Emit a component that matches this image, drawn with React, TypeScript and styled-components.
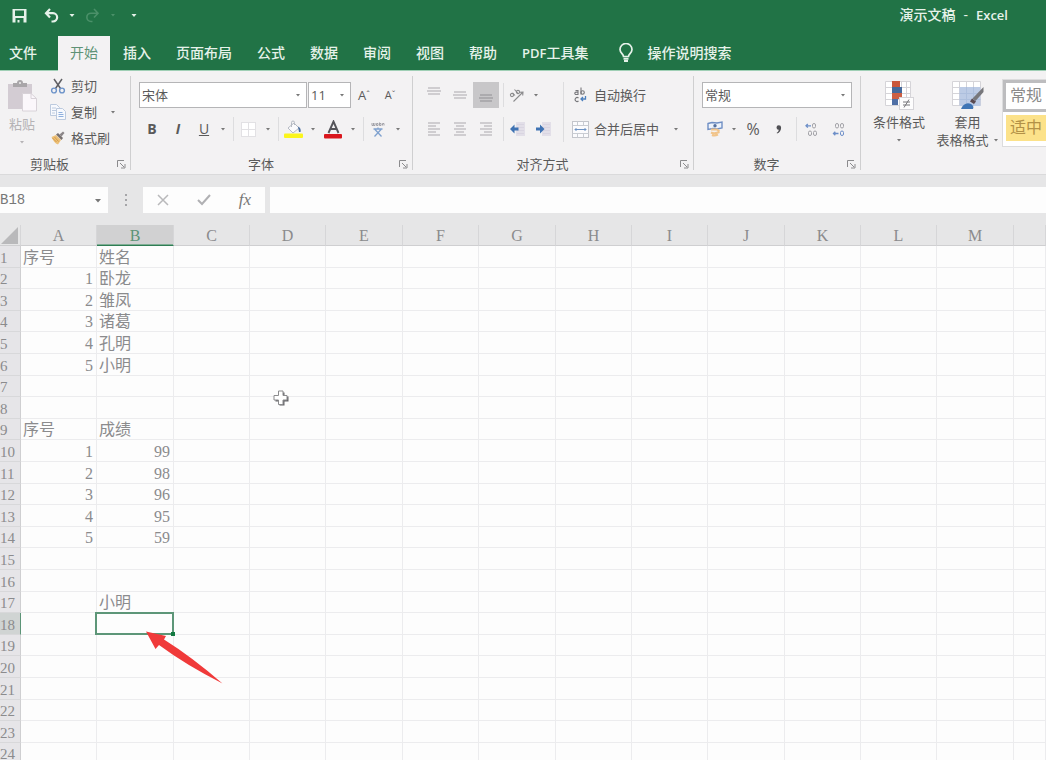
import React from "react";
import styled, { createGlobalStyle, css } from "styled-components";

const GREEN = "#217346";
const UI = `"Open Sans", "Noto Sans CJK SC", sans-serif`;
const SHEET = `"Liberation Serif", "Noto Sans CJK SC", serif`;

const GlobalStyle = createGlobalStyle`
  * { box-sizing: border-box; }
  html, body { margin: 0; height: 100%; overflow: hidden; }
  body { font-family: ${UI}; font-size: 13px; line-height: 18px; color: #5a5a5a; background: #e6e6e7; }
  button, input, select { font: inherit; color: inherit; margin: 0; padding: 0; border: 0; background: none; border-radius: 0; outline: none; }
  svg { display: block; flex: none; }
`;

const Window = styled.div`
  display: flex;
  flex-direction: column;
  height: 100vh;
  overflow: hidden;
`;

/* ---- title bar and tabs ---- */
const TitleBar = styled.header`
  display: flex;
  align-items: center;
  justify-content: space-between;
  height: 36px;
  padding: 0 38px 6px 3px;
  background: ${GREEN};
  color: #e6f2ea;
`;
const QuickAccess = styled.div`
  display: flex;
  align-items: center;
`;
const QuickButton = styled.button<{ $w: number; $dim?: boolean }>`
  display: flex;
  align-items: center;
  justify-content: center;
  width: ${(p) => p.$w}px;
  height: 24px;
  color: ${(p) => (p.$dim ? "#4b9069" : "#e6f2ea")};
`;
const DocTitle = styled.div`
  display: flex;
  gap: 8px;
  font-size: 14px;
  font-weight: 500;
  & > span:last-child { font-size: 13px; font-weight: 600; }
`;
const TabBar = styled.nav`
  display: flex;
  align-items: stretch;
  gap: 1px;
  height: 35px;
  padding-left: 9px;
  background: ${GREEN};
  box-shadow: inset 0 -1px 0 #9fcfb5;
`;
const Tab = styled.button<{ $active?: boolean; $first?: boolean }>`
  padding: 0 12px 2px;
  font-size: 14px;
  font-weight: 500;
  white-space: nowrap;
  color: #e6f2ea;
  ${(p) => p.$first && css`padding: 0 20px 2px 0;`}
  ${(p) => p.$active && css`
    background: #f3f2f3;
    color: #5f9276;
    font-weight: 400;
  `}
`;
const Latin = styled.span`
  font-size: 13px;
  font-weight: 600;
`;
const TellMe = styled.button`
  display: flex;
  align-items: center;
  gap: 14px;
  margin-left: 18px;
  padding-bottom: 2px;
  font-size: 14px;
  font-weight: 500;
  white-space: nowrap;
  color: #e6f2ea;
`;

/* ---- ribbon ---- */
const RibbonBar = styled.section`
  display: flex;
  height: 104px;
  background: #f3f2f3;
  border-bottom: 1px solid #dadadb;
  overflow: hidden;
`;
const Group = styled.div<{ $w?: number }>`
  display: flex;
  flex-direction: column;
  flex: ${(p) => (p.$w ? `0 0 ${p.$w}px` : "1 0 auto")};
`;
const GroupDivider = styled.div`
  flex: 0 0 1px;
  margin: 5px 0 4px;
  background: #cfcfd0;
`;
const GroupBody = styled.div<{ $flush?: boolean }>`
  display: flex;
  flex: 1;
  padding: ${(p) => (p.$flush ? "0" : "11px 0 0 8px")};
`;
const GroupFooter = styled.div<{ $shift?: number }>`
  display: flex;
  align-items: center;
  height: 20px;
  padding-right: 4px;
  & > span { flex: 1; padding-right: ${(p) => p.$shift ?? 8}px; text-align: center; }
`;
const Stack = styled.div<{ $gap?: number }>`
  display: flex;
  flex-direction: column;
  gap: ${(p) => p.$gap ?? 0}px;
`;
const ClipboardList = styled(Stack)`
  padding: 2px 0 0 6px;
`;
const Row = styled.div`
  display: flex;
  align-items: center;
  height: 26px;
`;
const Divider = styled.div<{ $tall?: boolean }>`
  width: 1px;
  height: ${(p) => (p.$tall ? 60 : 24)}px;
  margin-left: ${(p) => (p.$tall ? 7 : 4)}px;
  background: #dddddf;
`;
const IconButton = styled.button<{ $w?: number; $on?: boolean }>`
  display: flex;
  align-items: center;
  justify-content: center;
  width: ${(p) => p.$w ?? 26}px;
  height: 26px;
  background: ${(p) => (p.$on ? "#c8c7c9" : "transparent")};
`;
const Glyph = styled.span<{ $size?: number; $bold?: boolean; $italic?: boolean; $underline?: boolean }>`
  font-size: ${(p) => p.$size ?? 14}px;
  font-weight: ${(p) => (p.$bold ? 700 : 400)};
  font-style: ${(p) => (p.$italic ? "italic" : "normal")};
  text-decoration: ${(p) => (p.$underline ? "underline" : "none")};
`;
const TextButton = styled.button<{ $pad?: number }>`
  display: flex;
  align-items: center;
  gap: 5px;
  height: 26px;
  padding-left: ${(p) => p.$pad ?? 0}px;
  white-space: nowrap;
`;
const BigButton = styled.button<{ $w: number; $dim?: boolean; $right?: number }>`
  display: flex;
  flex-direction: column;
  align-items: center;
  width: ${(p) => p.$w}px;
  padding: 9px ${(p) => p.$right ?? 0}px 0 0;
  white-space: nowrap;
  color: ${(p) => (p.$dim ? "#b5b3b5" : "inherit")};
  & > svg:first-child { margin-bottom: 3px; }
`;
const BigLine = styled.span`
  display: flex;
  align-items: center;
  justify-content: center;
  gap: 4px;
  min-height: 18px;
`;
const SelectBox = styled.label<{ $w: number }>`
  display: flex;
  align-items: center;
  width: ${(p) => p.$w}px;
  height: 26px;
  padding-right: 4px;
  background: #fff;
  border: 1px solid #b5b5b7;
  & > select { flex: 1; min-width: 0; height: 24px; padding-left: 2px; appearance: none; }
`;
const SelectPair = styled.div`
  display: flex;
  gap: 1px;
`;
const Gallery = styled.div`
  flex: 1;
  min-width: 44px;
  height: 68px;
  margin-top: 8px;
  background: #fff;
  border: 1px solid #dcdcdd;
  border-right: 0;
  font-size: 16px;
  overflow: hidden;
`;
const StyleItem = styled.button<{ $picked?: boolean }>`
  display: block;
  width: 100px;
  text-align: left;
  white-space: nowrap;
  ${(p) => p.$picked
    ? css`height: 32px; padding: 0 0 3px 4px; border: 3px solid #bdbdbf; color: #8a8a8a;`
    : css`height: 26px; margin: 3px 0 0 3px; padding: 0 0 3px 4px; background: #fce28a; color: #b39147;`}
`;

/* ---- formula bar ---- */
const FormulaRow = styled.section`
  display: flex;
  align-items: center;
  height: 26px;
  margin: 12px 0;
`;
const NameBox = styled.label`
  display: flex;
  align-items: center;
  width: 108px;
  height: 26px;
  padding-right: 5px;
  background: #fdfdfd;
  & > input {
    flex: 1;
    min-width: 0;
    font-family: "Liberation Mono", monospace;
    font-size: 14px;
    color: #777;
  }
`;
const Grip = styled.div`
  display: flex;
  justify-content: center;
  width: 35px;
`;
const FormulaButtons = styled.div`
  display: flex;
  align-items: center;
  justify-content: space-between;
  width: 122px;
  height: 26px;
  padding: 0 7px;
  margin-right: 5px;
  background: #fdfdfd;
`;
const Fx = styled.span`
  font-family: "Liberation Serif", serif;
  font-size: 17px;
  font-style: italic;
  color: #777;
`;
const FormulaInput = styled.input`
  flex: 1;
  height: 26px;
  && { background: #fdfdfd; }
`;

/* ---- worksheet ---- */
const SheetArea = styled.main`
  position: relative;
  flex: 1;
  overflow: hidden;
  background: #fdfdfd;
`;
const Grid = styled.table`
  width: 100%;
  table-layout: fixed;
  border-spacing: 0;
  font-family: ${SHEET};
  font-size: 16px;
  line-height: 18px;
  color: #8b8b8d;
  & th { font-weight: 400; padding: 2px 0 0; }
`;
const Column = styled.col<{ $w?: number }>`
  width: ${(p) => (p.$w ? `${p.$w}px` : "auto")};
`;
const ColumnHead = styled.th<{ $on?: boolean }>`
  height: 21px;
  background: ${(p) => (p.$on ? "#d1d1d2" : "#e6e6e7")};
  color: ${(p) => (p.$on ? "#5c9477" : "#8b8b8d")};
  border-right: 1px solid #d6d6d8;
  border-bottom: 1px solid ${(p) => (p.$on ? "#2f7d54" : "#cfcfd1")};
  box-shadow: ${(p) => (p.$on ? "inset 0 -1px 0 #7fae94" : "none")};
`;
const Corner = styled.th`
  background: #e6e6e7;
  border-right: 1px solid #d6d6d8;
  border-bottom: 1px solid #cfcfd1;
`;
const SheetRow = styled.tr<{ $h: number }>`
  height: ${(p) => p.$h}px;
`;
const RowHead = styled.th<{ $on?: boolean }>`
  text-align: left;
  font-size: 15px;
  background: ${(p) => (p.$on ? "#d0d4d3" : "#e6e5e8")};
  border-right: 1px solid ${(p) => (p.$on ? "#5c9477" : "#cfcfd1")};
  border-bottom: 1px solid #d8d8da;
`;
const Cell = styled.td<{ $num?: boolean; $on?: boolean }>`
  padding: 2px 3px 0 2px;
  text-align: ${(p) => (p.$num ? "right" : "left")};
  white-space: nowrap;
  border-right: 1px solid #ececee;
  border-bottom: 1px solid #ececee;
  ${(p) => p.$on && css`
    position: relative;
    &::before { content: ""; position: absolute; inset: -1px -1px -1px -2px; border: 2px solid #5d9678; }
    &::after { content: ""; position: absolute; right: -2px; bottom: -2px; width: 4px; height: 4px; background: #137a41; }
  `}
`;
const Pointer = styled.svg<{ $x: number; $y: number }>`
  position: absolute;
  left: ${(p) => p.$x}px;
  top: ${(p) => p.$y}px;
  pointer-events: none;
`;

/* ---- icons ---- */
const Caret = ({ w = 12, s = 4, c = "#777" }: { w?: number; s?: number; c?: string }) => (
  <svg width={w} height="8" viewBox={`0 0 ${w} 8`} aria-hidden>
    <path d={`M${w / 2 - s / 2} 3h${s}l${-s / 2} ${s / 2 + 0.5}z`} fill={c} />
  </svg>
);
const Launcher = () => (
  <svg width="9" height="9" viewBox="0 0 9 9" fill="none" stroke="#8b8b8d" aria-hidden>
    <path d="M.5 7V.5H7M3 3l4 4M8 4v4H4" />
  </svg>
);
const SaveIcon = () => (
  <svg width="15" height="15" viewBox="0 0 15 15" aria-hidden>
    <path fillRule="evenodd" fill="currentColor" d="M.5 1h14v13.500H.5zM3 2.500v5.500h9V2.500zM3.500 10v4.500H5.500V12h2v2.500H11.500V10z" />
  </svg>
);
const UndoIcon = ({ flip }: { flip?: boolean }) => (
  <svg width="15" height="15" viewBox="0 0 15 15" fill="none" stroke="currentColor" strokeWidth={flip ? 1.6 : 2.2} aria-hidden>
    <g transform={flip ? "translate(15 0) scale(-1 1)" : undefined}>
      <path d="M6 1L2 5.200l4 4.300M2.500 5.200H9a4 4 0 0 1 0 8.300H7.500" />
    </g>
  </svg>
);
const BulbIcon = () => (
  <svg width="14" height="20" viewBox="0 0 14 20" fill="none" stroke="currentColor" strokeWidth="1.700" aria-hidden>
    <path d="M4.500 13.500c0-2.500-3.500-3.500-3.500-7a6 6 0 0 1 12 0c0 3.500-3.500 4.500-3.500 7z" />
    <path d="M4.500 15.800h5M5 18h4" strokeWidth="2" />
  </svg>
);
const PasteIcon = () => (
  <svg width="30" height="32" viewBox="0 0 30 32" aria-hidden>
    <rect x="1" y="4" width="24" height="25" fill="#d3ccd3" />
    <path d="M6 3h4a3 3 0 0 1 6 0h4v4H6z" fill="#a9a6a9" />
    <circle cx="13" cy="3" r="1" fill="#eee" />
    <path d="M15.500 13.500h8.500l5.500 5V31h-14z" fill="#fbf7fb" stroke="#d8d2d8" />
    <path d="M24 13.500v5h5.500" fill="none" stroke="#d8d2d8" />
  </svg>
);
const CutIcon = () => (
  <svg width="16" height="16" viewBox="0 0 16 16" fill="none" aria-hidden>
    <path d="M4 1l6.500 9.500M12 1L5.500 10.500" stroke="#606064" strokeWidth="1.500" />
    <circle cx="4" cy="12.500" r="2.400" stroke="#6d93c9" strokeWidth="1.400" />
    <circle cx="12" cy="12.500" r="2.400" stroke="#6d93c9" strokeWidth="1.400" />
  </svg>
);
const CopyIcon = () => (
  <svg width="16" height="16" viewBox="0 0 16 16" fill="#f7f9fd" stroke="#bccade" aria-hidden>
    <path d="M.5.5h6l3 3v8h-9z" />
    <path d="M2 4h4M2 6.500h4M2 9h3" />
    <path d="M6.500 4.500h6l3 3v8h-9z" />
    <path d="M8.500 8.500h4M8.500 10.500h5M8.500 12.500h5" stroke="#8fb0de" />
  </svg>
);
const BrushIcon = () => (
  <svg width="16" height="16" viewBox="0 0 16 16" aria-hidden>
    <path d="M1.500 7l4.500-2 5 5-3 4.500c-3-1-5-4-6.500-7.500z" fill="#ecc078" />
    <path d="M2.500 8l4 4M4.500 7l4 4.500" stroke="#d69b47" />
    <path d="M6 4.500l2-1.500 5 5-1.500 2z" fill="#77706f" />
    <path d="M9.500 4.500L13 1.500l1.500 1.500-3 3.500z" fill="#8b8688" />
  </svg>
);
const BordersIcon = () => (
  <svg width="15" height="15" viewBox="0 0 15 15" aria-hidden>
    <rect x=".5" y=".5" width="14" height="14" fill="#fff" stroke="#e2e1e4" />
    <path d="M7.500 1v13M1 7.500h13" stroke="#e2e1e4" />
  </svg>
);
const FillIcon = () => (
  <svg width="19" height="18" viewBox="0 0 19 18" aria-hidden>
    <path d="M4 8l6-5 5 5-6 5z" fill="#fbfbfd" stroke="#b5bac3" />
    <path d="M7.500 7V2.500a1.500 1.500 0 0 1 3 0V5" fill="none" stroke="#b5bac3" />
    <path d="M14 6.500c2.500 1 3 3 2.500 5.500h-1.500z" fill="#4a6fa0" />
    <rect y="13.500" width="19" height="4.500" rx="1" fill="#fbf51c" />
  </svg>
);
const FontColorIcon = () => (
  <svg width="19" height="19" viewBox="0 0 19 19" aria-hidden>
    <path d="M4.500 13L9.500 1.500l5 11.500M6.500 9h6" fill="none" stroke="#55555a" strokeWidth="1.900" />
    <rect y="14" width="18" height="4.500" rx="1" fill="#d9161d" />
  </svg>
);
const PhoneticIcon = () => (
  <svg width="14" height="15" viewBox="0 0 14 15" fill="none" aria-hidden>
    <path d="M1 1v2.500h1.500V1M2.500 3.500H4V1M5.500 3.500V1.500h1.500v2zM8.500.5v3H10v-2H8.500M11.500 3.500v-2H13v2" stroke="#a2a2a8" />
    <path d="M2.500 7h9M7 5.500V7M4 7.500l6.500 7M10 7.500l-6.500 7" stroke="#7fa1cf" strokeWidth="1.300" />
  </svg>
);
const Lines = ({ rows, top, h = 14, c = "#cfcdd0" }: { rows: [number, number][]; top: number; h?: number; c?: string }) => (
  <svg width="14" height={h} viewBox={`0 0 14 ${h}`} stroke={c} strokeWidth="2" aria-hidden>
    {rows.map(([a, b], i) => <path key={i} d={`M${a} ${top + i * 3}H${b}`} />)}
  </svg>
);
const OrientIcon = () => (
  <svg width="16" height="15" viewBox="0 0 16 15" fill="none" stroke="#8b8b8d" strokeWidth="1.100" aria-hidden>
    <path d="M4.500 13.500L13.500 4.500M10.500 4.200l3.500-.2-.3 3.500" />
    <circle cx="3" cy="7" r="1.600" />
    <path d="M3.500 4.800l2.500 2.700M5.500 1.500l4 4.500" />
    <circle cx="9" cy="4" r="1.600" />
  </svg>
);
const IndentIcon = ({ right }: { right?: boolean }) => (
  <svg width="17" height="15" viewBox="0 0 17 15" aria-hidden>
    <rect x="7" width="9" height="14" fill="#e2dfe8" />
    <path d="M8 2.500h7M8 5.500h7M8 8.500h7M8 11.500h7" stroke="#d9d5e1" />
    {right
      ? <path d="M1 5.500h4V2.500L9.500 7 5 11.500V8.500H1z" fill="#3f73b3" />
      : <path d="M9.500 5.500h-4V2.500L1 7l4.500 4.500V8.500h4z" fill="#3f73b3" />}
  </svg>
);
const WrapIcon = () => (
  <svg width="17" height="16" viewBox="0 0 17 16" fill="none" stroke="#77777b" strokeWidth="1.100" aria-hidden>
    <path d="M3.500 3.500h2.500v4H4a1.200 1.200 0 0 1 0-2.400h2M9 .5v7" />
    <circle cx="10.600" cy="5.500" r="1.700" />
    <path d="M6.500 11a2 2 0 1 0 0 3" />
    <path d="M13.500 9v3H9.500M11 10l-2 2 2 2" stroke="#4d80bd" strokeWidth="1.300" />
  </svg>
);
const MergeIcon = () => (
  <svg width="17" height="17" viewBox="0 0 17 17" fill="none" aria-hidden>
    <rect x=".5" y=".5" width="16" height="16" fill="#fbfbfd" stroke="#c3c5cb" />
    <path d="M.5 4.500h16M.5 12.500h16M5.500.5v4M11.500.5v4M5.500 12.500v4M11.500 12.500v4" stroke="#c9ccd2" />
    <path d="M3 8.500h11M4.500 7L3 8.500 4.500 10M12.500 7L14 8.500 12.500 10" stroke="#6d93c4" />
  </svg>
);
const CurrencyIcon = () => (
  <svg width="16" height="16" viewBox="0 0 16 16" fill="none" aria-hidden>
    <path d="M1 2.500l4-1 5 .5 5-1v6l-5 1-4-.5-5 1z" fill="#eef3fb" stroke="#6f8fc4" strokeWidth="1.400" />
    <circle cx="8" cy="4.800" r="1.700" fill="#55719f" />
    <path d="M4 8.500h6l2.500 2M4 11.500c2 1 5 1 8.500-.5M5 14c2 1 4 .5 6-.5" stroke="#f1c48a" strokeWidth="2" />
  </svg>
);
const CommaIcon = () => (
  <svg width="6" height="9" viewBox="0 0 6 9" aria-hidden>
    <path d="M.5 2.500a2.200 2.200 0 0 1 4.600 0C5.200 5.500 3.500 7.800 1 8.500l-.3-.8C2 7 2.700 6 2.700 4.700A2.200 2.200 0 0 1 .5 2.500z" fill="#505054" />
  </svg>
);
const DecimalIcon = ({ less }: { less?: boolean }) => (
  <svg width="13" height="13" viewBox="0 0 13 13" fill="none" stroke="#a2a2a7" aria-hidden>
    {less ? (
      <>
        <rect x="3.500" y=".5" width="3" height="4.500" rx="1.500" />
        <rect x="8.500" y=".5" width="3" height="4.500" rx="1.500" />
        <rect x="8.500" y="8" width="3" height="4.500" rx="1.500" stroke="#6d8fc8" />
        <path d="M6.500 10.500H1.500M3.300 8.800l-1.800 1.700 1.800 1.700" stroke="#6d8fc8" strokeWidth="1.300" />
      </>
    ) : (
      <>
        <rect x="7.500" y=".5" width="3" height="4.500" rx="1.500" />
        <rect x="3.500" y="8" width="3" height="4.500" rx="1.500" />
        <rect x="8.500" y="8" width="3" height="4.500" rx="1.500" />
        <path d="M6 2.800H1M2.800 1L1 2.800l1.800 1.800" stroke="#6d8fc8" strokeWidth="1.300" />
      </>
    )}
  </svg>
);
const ConditionalIcon = () => (
  <svg width="30" height="30" viewBox="0 0 30 30" aria-hidden>
    <path d="M1.500 1.500h25v24h-25z" fill="#fff" stroke="#d5d4d8" />
    <path d="M8.500 1v25M17.500 1v25M22.500 1v25M1 7.500h26M1 13.500h26M1 19.500h26" fill="none" stroke="#d5d4d8" />
    <path d="M8 1h8v6H8z" fill="#c9573b" />
    <path d="M8 7h10v6H8z" fill="#44699b" />
    <path d="M8 13h10v6H8z" fill="#cc5f43" />
    <path d="M8 19h6v6H8z" fill="#4f6fa5" />
    <rect x="15.500" y="17.500" width="14" height="12" fill="#fdfdfd" stroke="#d5d4d8" />
    <path d="M19 22h7M19 25h7M25 19.500l-5 8" stroke="#77777b" />
  </svg>
);
const TableIcon = () => (
  <svg width="32" height="30" viewBox="0 0 32 30" aria-hidden>
    <path d="M.5 1.500h28v24H.5z" fill="#fff" stroke="#d5d4d8" />
    <path d="M7.500 1v25M14.500 1v25M21.500 1v25M0 7.500h29M0 13.500h29M0 19.500h29" fill="none" stroke="#d5d4d8" />
    <path d="M7.500 7h21v19h-21z" fill="#bccbe5" />
    <path d="M14.500 7v19M21.500 7v19M7.500 13.500h21M7.500 19.500h21" stroke="#adbfdd" />
    <path d="M31.500 7v5l-8 9-3-2.500z" fill="#77777b" />
    <path d="M20 18.500l4 3-2 2.500-4-2.500z" fill="#5a4a50" />
    <path d="M9 29c2-5 6-7 10-5 2 1 3 3 2 5z" fill="#3f75b5" />
  </svg>
);

/* ---- data ---- */
const TABS = ["插入", "页面布局", "公式", "数据", "审阅", "视图", "帮助"];
const COLUMNS = "ABCDEFGHIJKLM".split("");
const WIDE_COLUMNS = "BEGJM";
const ROW_HEIGHTS = [22, 21, 22, 21, 22];
const DATA: Record<number, [string | number, string | number]> = {
  1: ["序号", "姓名"],
  2: [1, "卧龙"],
  3: [2, "雏凤"],
  4: [3, "诸葛"],
  5: [4, "孔明"],
  6: [5, "小明"],
  9: ["序号", "成绩"],
  10: [1, 99],
  11: [2, 98],
  12: [3, 96],
  13: [4, 95],
  14: [5, 59],
  17: ["", "小明"],
};

const FULL: [number, number][] = [[1, 13], [0, 14], [1, 13]];
const LEFT: [number, number][] = [[1, 13], [1, 9], [1, 13], [1, 9], [1, 13]];
const CENTER: [number, number][] = [[1, 13], [3, 11], [1, 13], [3, 11], [1, 13]];
const RIGHT: [number, number][] = [[1, 13], [5, 13], [1, 13], [5, 13], [1, 13]];

function Ribbon() {
  return (
    <RibbonBar>
      <Group $w={130}>
        <GroupBody $flush>
          <BigButton $w={44} $dim>
            <PasteIcon />
            <BigLine>粘贴</BigLine>
            <BigLine><Caret c="#b5b3b5" /></BigLine>
          </BigButton>
          <ClipboardList>
            <TextButton><CutIcon />剪切</TextButton>
            <Row>
              <TextButton><CopyIcon />复制</TextButton>
              <Caret w={32} />
            </Row>
            <TextButton><BrushIcon />格式刷</TextButton>
          </ClipboardList>
        </GroupBody>
        <GroupFooter $shift={18}><span>剪贴板</span><Launcher /></GroupFooter>
      </Group>
      <GroupDivider />

      <Group $w={281}>
        <GroupBody>
          <Stack $gap={8}>
            <Row>
              <SelectPair>
                <SelectBox $w={168}>
                  <select aria-label="字体"><option>宋体</option></select>
                  <Caret w={8} />
                </SelectBox>
                <SelectBox $w={43}>
                  <select aria-label="字号"><option>11</option></select>
                  <Caret w={8} />
                </SelectBox>
              </SelectPair>
              <IconButton aria-label="增大字号">
                <Glyph $size={13}>A</Glyph><Glyph $size={9}>ˆ</Glyph>
              </IconButton>
              <IconButton aria-label="减小字号">
                <Glyph $size={11}>A</Glyph><Glyph $size={9}>ˇ</Glyph>
              </IconButton>
            </Row>
            <Row>
              <IconButton><Glyph $bold>B</Glyph></IconButton>
              <IconButton><Glyph $bold $italic>I</Glyph></IconButton>
              <IconButton><Glyph $underline>U</Glyph></IconButton>
              <Caret />
              <Divider />
              <IconButton $w={28} aria-label="边框"><BordersIcon /></IconButton>
              <Caret />
              <Divider />
              <IconButton $w={28} aria-label="填充颜色"><FillIcon /></IconButton>
              <Caret />
              <IconButton $w={28} aria-label="字体颜色"><FontColorIcon /></IconButton>
              <Caret />
              <Divider />
              <IconButton $w={28} aria-label="拼音"><PhoneticIcon /></IconButton>
              <Caret />
            </Row>
          </Stack>
        </GroupBody>
        <GroupFooter><span>字体</span><Launcher /></GroupFooter>
      </Group>
      <GroupDivider />

      <Group $w={280}>
        <GroupBody>
          <Stack $gap={8}>
            <Row>
              <IconButton aria-label="顶端对齐"><Lines rows={FULL} top={2} h={18} /></IconButton>
              <IconButton aria-label="垂直居中"><Lines rows={FULL} top={4} /></IconButton>
              <IconButton $on aria-label="底端对齐"><Lines rows={FULL} top={8} h={16} c="#acabae" /></IconButton>
              <Divider />
              <IconButton aria-label="方向"><OrientIcon /></IconButton>
              <Caret />
            </Row>
            <Row>
              <IconButton aria-label="左对齐"><Lines rows={LEFT} top={1} /></IconButton>
              <IconButton aria-label="居中"><Lines rows={CENTER} top={1} /></IconButton>
              <IconButton aria-label="右对齐"><Lines rows={RIGHT} top={1} /></IconButton>
              <Divider />
              <IconButton aria-label="减少缩进量"><IndentIcon /></IconButton>
              <IconButton aria-label="增加缩进量"><IndentIcon right /></IconButton>
            </Row>
          </Stack>
          <Divider $tall />
          <Stack $gap={8}>
            <TextButton $pad={8}><WrapIcon />自动换行</TextButton>
            <Row>
              <TextButton $pad={8}><MergeIcon />合并后居中</TextButton>
              <Caret w={34} />
            </Row>
          </Stack>
        </GroupBody>
        <GroupFooter><span>对齐方式</span><Launcher /></GroupFooter>
      </Group>
      <GroupDivider />

      <Group $w={166}>
        <GroupBody>
          <Stack $gap={8}>
            <SelectBox $w={150}>
              <select aria-label="数字格式"><option>常规</option></select>
              <Caret w={8} />
            </SelectBox>
            <Row>
              <IconButton aria-label="会计数字格式"><CurrencyIcon /></IconButton>
              <Caret />
              <IconButton><Glyph $size={16}>%</Glyph></IconButton>
              <IconButton aria-label="千位分隔样式"><CommaIcon /></IconButton>
              <Divider />
              <IconButton $w={28} aria-label="增加小数位数"><DecimalIcon /></IconButton>
              <IconButton aria-label="减少小数位数"><DecimalIcon less /></IconButton>
            </Row>
          </Stack>
        </GroupBody>
        <GroupFooter><span>数字</span><Launcher /></GroupFooter>
      </Group>
      <GroupDivider />

      <Group>
        <GroupBody $flush>
          <BigButton $w={76}>
            <ConditionalIcon />
            <BigLine>条件格式</BigLine>
            <BigLine><Caret /></BigLine>
          </BigButton>
          <BigButton $w={65} $right={4}>
            <TableIcon />
            <BigLine>套用</BigLine>
            <BigLine>表格格式<Caret w={6} /></BigLine>
          </BigButton>
          <Gallery>
            <StyleItem $picked>常规</StyleItem>
            <StyleItem>适中</StyleItem>
          </Gallery>
        </GroupBody>
      </Group>
    </RibbonBar>
  );
}

function Sheet() {
  return (
    <SheetArea>
      <Grid>
        <colgroup>
          <Column $w={21} />
          {COLUMNS.map((c) => <Column key={c} $w={WIDE_COLUMNS.includes(c) ? 77 : 76} />)}
          <Column />
        </colgroup>
        <thead>
          <tr>
            <Corner aria-label="全选">
              <svg width="20" height="18" viewBox="0 0 20 18" aria-hidden><path d="M18 0v17H1z" fill="#b9b9bb" /></svg>
            </Corner>
            {COLUMNS.map((c) => <ColumnHead key={c} $on={c === "B"}>{c}</ColumnHead>)}
            <ColumnHead />
          </tr>
        </thead>
        <tbody>
          {Array.from({ length: 24 }, (_, i) => i + 1).map((n) => (
            <SheetRow key={n} $h={ROW_HEIGHTS[(n - 1) % 5]}>
              <RowHead $on={n === 18}>{n}</RowHead>
              {COLUMNS.map((c, i) => {
                const value = DATA[n]?.[i] ?? "";
                return (
                  <Cell key={c} $num={typeof value === "number"} $on={n === 18 && c === "B"}>{value}</Cell>
                );
              })}
              <Cell />
            </SheetRow>
          ))}
        </tbody>
      </Grid>
      <Pointer $x={272} $y={164} width="18" height="18" viewBox="0 0 18 18" aria-hidden>
        <path d="M7.500 3.500h5v4h4v5h-4v4h-5v-4h-4v-5h4z" fill="#66666a" />
        <path d="M6.500 2h4.500v4.500h4v4.500h-4v4.500H6.500V11H2V6.500h4.500z" fill="#fff" stroke="#8b8b8d" />
      </Pointer>
      <Pointer $x={146} $y={406} width="78" height="54" viewBox="0 0 78 54" aria-hidden>
        <path d="M0 .5L20 5l-2 3.500Q46 26 76.500 52.500 40 34 13 14L9.500 18z" fill="#f03a3a" />
      </Pointer>
    </SheetArea>
  );
}

export default function App() {
  return (
    <Window>
      <GlobalStyle />
      <TitleBar>
        <QuickAccess>
          <QuickButton $w={33} aria-label="保存"><SaveIcon /></QuickButton>
          <QuickButton $w={30} aria-label="撤消"><UndoIcon /></QuickButton>
          <Caret s={5} c="#e6f2ea" />
          <QuickButton $w={29} $dim aria-label="恢复"><UndoIcon flip /></QuickButton>
          <Caret c="#4b9069" />
          <QuickButton $w={30} aria-label="自定义快速访问工具栏"><Caret s={5} c="#e6f2ea" /></QuickButton>
        </QuickAccess>
        <DocTitle><span>演示文稿</span><span>-</span><span>Excel</span></DocTitle>
      </TitleBar>
      <TabBar>
        <Tab $first>文件</Tab>
        <Tab $active>开始</Tab>
        {TABS.map((t) => <Tab key={t}>{t}</Tab>)}
        <Tab><Latin>PDF</Latin>工具集</Tab>
        <TellMe><BulbIcon />操作说明搜索</TellMe>
      </TabBar>
      <Ribbon />
      <FormulaRow>
        <NameBox>
          <input aria-label="名称框" defaultValue="B18" />
          <Caret w={10} s={6} />
        </NameBox>
        <Grip>
          <svg width="4" height="14" viewBox="0 0 4 14" fill="#a5a5a8" aria-hidden>
            <path d="M1 1h2v2H1zM1 6h2v2H1zM1 11h2v2H1z" />
          </svg>
        </Grip>
        <FormulaButtons>
          <IconButton aria-label="取消">
            <svg width="12" height="12" viewBox="0 0 12 12" stroke="#b9b9bb" strokeWidth="1.500" aria-hidden><path d="M1 1l10 10M11 1L1 11" /></svg>
          </IconButton>
          <IconButton aria-label="输入">
            <svg width="14" height="12" viewBox="0 0 14 12" fill="none" stroke="#b0b0b3" strokeWidth="2" aria-hidden><path d="M1 6l4 4 8-9" /></svg>
          </IconButton>
          <IconButton aria-label="插入函数"><Fx>fx</Fx></IconButton>
        </FormulaButtons>
        <FormulaInput aria-label="编辑栏" />
      </FormulaRow>
      <Sheet />
    </Window>
  );
}
